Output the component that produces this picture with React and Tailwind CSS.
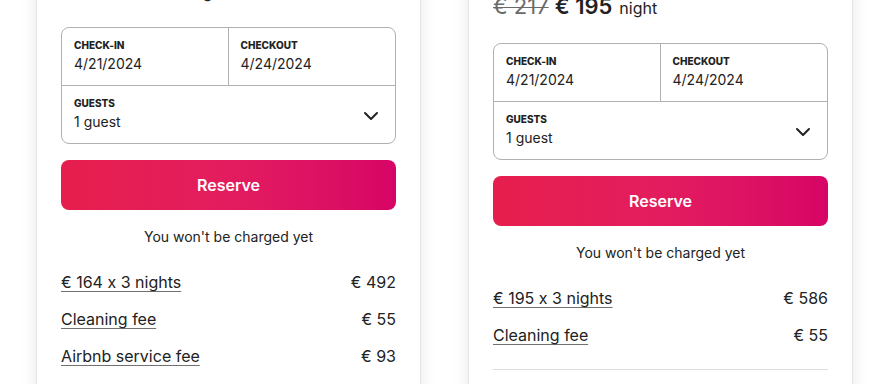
import React from "react";

function Chevron() {
  return (
    <svg width="16" height="16" viewBox="0 0 32 32" fill="none" stroke="#222" strokeWidth="4" strokeLinecap="round" strokeLinejoin="round">
      <path d="M28 12 16 24 4 12" />
    </svg>
  );
}

function Field({ label, value }) {
  return (
    <div className="pt-[11px]">
      <div className="text-[10px] leading-[12px] font-extrabold text-[#222]">{label}</div>
      <div className="mt-[4px] text-[14px] leading-[18px] text-[#222]">{value}</div>
    </div>
  );
}

function Card({ oldPrice, price, rows, offset }) {
  return (
    <div className={`w-[385px] shrink-0 bg-white border border-[#e4e4e4] rounded-xl shadow-[0_6px_16px_rgba(0,0,0,0.10)] px-6 pt-[20px] pb-10 ${offset}`}>
      <div className="flex items-baseline gap-[6px] h-[26px] leading-[26px] mb-6 text-[#222]">
        <span className="text-[22px] text-[#6a6a6a] line-through decoration-1">{oldPrice}</span>
        <span className="text-[22px] font-semibold">{price}</span>
        <span className="text-[16px] ml-[1px]">night</span>
      </div>
      <div className="border border-[#b0b0b0] rounded-lg">
        <div className="grid grid-cols-2 border-b border-[#b0b0b0]">
          <div className="h-[57px] px-3 border-r border-[#b0b0b0]">
            <Field label="CHECK-IN" value="4/21/2024" />
          </div>
          <div className="h-[57px] px-3">
            <Field label="CHECKOUT" value="4/24/2024" />
          </div>
        </div>
        <div className="h-[57px] pl-3 pr-4 flex items-center justify-between">
          <div className="self-start">
            <Field label="GUESTS" value="1 guest" />
          </div>
          <Chevron />
        </div>
      </div>
      <button className="mt-4 w-full h-[50px] rounded-lg bg-gradient-to-r from-[#e61e4d] via-[#e31c5f] to-[#d70466] text-white text-[16px] font-semibold">
        Reserve
      </button>
      <div className="mt-[18px] text-center text-[14px] leading-[18px] text-[#222]">You won't be charged yet</div>
      <div className="mt-[26px] flex flex-col gap-[17px]">
        {rows.map(([l, r]) => (
          <div key={l} className="flex justify-between text-[16px] leading-[20px] text-[#222]">
            <span className="underline decoration-[#717171] underline-offset-[3px]">{l}</span>
            <span>{r}</span>
          </div>
        ))}
      </div>
      <div className="mt-[24px] border-t border-[#dddddd]" />
    </div>
  );
}

export default function App() {
  return (
    <div className="w-[896px] h-[384px] overflow-hidden bg-white font-['Inter',sans-serif] [font-feature-settings:'calt'_0]">
      <div className="flex items-start gap-[47px] pl-[36px]">
        <Card
          oldPrice="€ 182"
          price="€ 164"
          offset="-mt-[44px]"
          rows={[["€ 164 x 3 nights", "€ 492"], ["Cleaning fee", "€ 55"], ["Airbnb service fee", "€ 93"]]}
        />
        <Card
          oldPrice="€ 217"
          price="€ 195"
          offset="-mt-[28px]"
          rows={[["€ 195 x 3 nights", "€ 586"], ["Cleaning fee", "€ 55"]]}
        />
      </div>
    </div>
  );
}
